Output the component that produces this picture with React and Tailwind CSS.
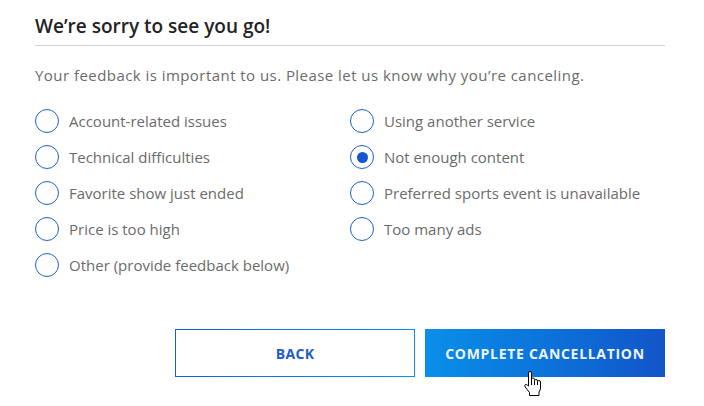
import React from "react";

const left = [
  "Account-related issues",
  "Technical difficulties",
  "Favorite show just ended",
  "Price is too high",
  "Other (provide feedback below)",
];
const right = [
  "Using another service",
  "Not enough content",
  "Preferred sports event is unavailable",
  "Too many ads",
];

function Radio({ label, checked }) {
  return (
    <div className="flex items-center h-[36px]">
      <span className="w-[24px] h-[24px] rounded-full border-[1.5px] border-[#1a5fd0] flex items-center justify-center shrink-0">
        {checked && <span className="w-[11px] h-[11px] rounded-full bg-[#1656cc]" />}
      </span>
      <span className="ml-[10px] text-[15px] text-[#6b6b6b] leading-none">{label}</span>
    </div>
  );
}

function Hand() {
  return (
    <svg width="18" height="25" viewBox="0 0 18 25" className="absolute left-[524px] top-[371px]">
      <path
        d="M4.5 2 Q4.5 0.5 6 0.5 Q7.5 0.5 7.5 2 L7.5 8 Q8 7 9 7 Q10.5 7 10.5 8.5 L10.5 9.5 Q11 8.5 12 8.5 Q13.5 8.5 13.5 10 L13.5 10.5 Q14 9.5 15 9.5 Q16.5 9.5 16.5 11 L16.5 17 Q16.5 19 15 21 L15 24.5 L5.5 24.5 L5.5 21.5 Q3.5 19 1.2 16 Q0.3 14.5 1.3 13.6 Q2.3 12.9 3.3 13.9 L4.5 15.2 Z"
        fill="#fff"
        stroke="#000"
        strokeWidth="1"
        strokeLinejoin="round"
      />
      <path d="M7.5 8 L7.5 14 M10.5 9.5 L10.5 14 M13.5 10.5 L13.5 14" stroke="#000" strokeWidth="1" />
    </svg>
  );
}

export default function App() {
  return (
    <div
      className="relative w-[704px] h-[406px] bg-white overflow-hidden"
      style={{ fontFamily: "'Open Sans', Lato, sans-serif" }}
    >
      <div className="pl-[35px] w-[665px]">
        <div className="pt-[13px] h-[46px] border-b border-[#cfcfcf]">
          <h1 className="text-[19px] font-semibold text-[#232323] leading-[26px]">
            We’re sorry to see you go!
          </h1>
        </div>
        <p className="mt-[20px] text-[15px] text-[#6b6b6b] leading-[18px] tracking-[0.45px]">
          Your feedback is important to us. Please let us know why you’re canceling.
        </p>
        <div className="mt-[19px] grid grid-cols-[315px_1fr]">
          <div className="flex flex-col">
            {left.map((l) => (
              <Radio key={l} label={l} />
            ))}
          </div>
          <div className="flex flex-col">
            {right.map((l) => (
              <Radio key={l} label={l} checked={l === "Not enough content"} />
            ))}
          </div>
        </div>
        <div className="mt-[46px] flex justify-end gap-[10px]">
          <button className="w-[240px] h-[48px] p-[1px] bg-gradient-to-r from-[#1560cf] to-[#0a90e8]">
            <span className="flex w-full h-full items-center justify-center bg-white text-[14px] font-bold text-[#1d5dc6] tracking-[0.3px]">
              BACK
            </span>
          </button>
          <button className="w-[240px] h-[48px] bg-gradient-to-r from-[#0a8fe9] to-[#1255c9] text-[14px] font-bold text-[#eef4fb] tracking-[0.7px]">
            COMPLETE CANCELLATION
          </button>
        </div>
      </div>
      <Hand />
    </div>
  );
}
